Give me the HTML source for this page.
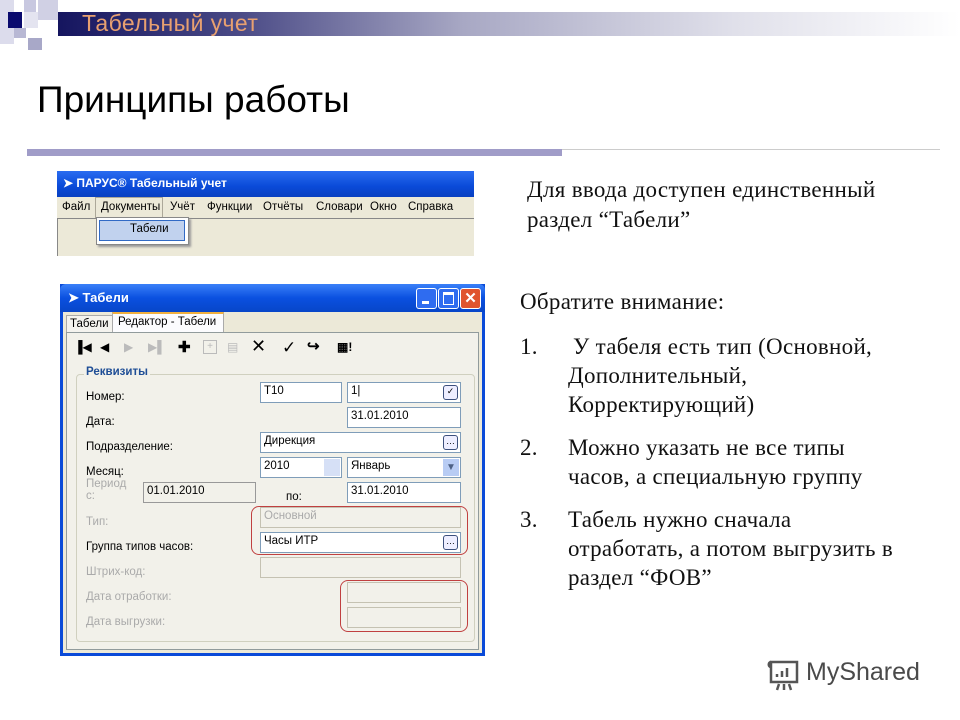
<!DOCTYPE html>
<html><head><meta charset="utf-8"><style>
body{margin:0;width:960px;height:720px;background:#fff;position:relative;overflow:hidden;font-family:"Liberation Sans",sans-serif}
.a{position:absolute}
.s{font-family:"Liberation Serif",serif;font-size:23px;letter-spacing:0.3px;color:#111;white-space:nowrap}
.w{font-size:11.5px;color:#000;white-space:nowrap}
.f{position:absolute;background:#fff;border:1px solid #7f9db9;box-sizing:border-box;font-size:11.5px;padding:2px 3px;height:21px}
.g{color:#aaa}
.dis{background:#f2f1ea;border-color:#c5c2b2}
.dots{position:absolute;right:2px;top:2px;width:15px;height:15px;border:1px solid #3c4f7c;border-radius:3px;background:#eef;font-size:9px;line-height:10px;text-align:center;box-sizing:border-box}
</style></head><body>
<div class="a" style="left:0;top:0;width:14px;height:44px;background:#dcdcec"></div>
<div class="a" style="left:24px;top:0;width:12px;height:12px;background:#c8c8e0"></div>
<div class="a" style="left:8px;top:12px;width:14px;height:16px;background:#0a0a6e"></div>
<div class="a" style="left:24px;top:12px;width:14px;height:16px;background:#e4e4f0"></div>
<div class="a" style="left:14px;top:28px;width:12px;height:10px;background:#b8b8d4"></div>
<div class="a" style="left:28px;top:38px;width:14px;height:12px;background:#a8a8c8"></div>
<div class="a" style="left:38px;top:0;width:20px;height:20px;background:#d0d0e4"></div>
<div class="a" style="left:58px;top:12px;width:902px;height:24px;background:linear-gradient(90deg,#15155f 0%,#4a4a86 20%,#a8a8c4 45%,#e0e0ea 75%,#fff 100%)"></div>
<div class="a" style="left:82px;top:10px;font-size:23px;letter-spacing:0.4px;color:#e8a070">Табельный учет</div>
<div class="a" style="left:37px;top:79px;font-size:37px;color:#000">Принципы работы</div>
<div class="a" style="left:27px;top:149px;width:535px;height:7px;background:#a09cc8"></div>
<div class="a" style="left:562px;top:149px;width:378px;height:1px;background:#ccc"></div>

<div class="a" style="left:57px;top:171px;width:417px;height:85px;background:#ece9d8;overflow:hidden">
 <div class="a" style="left:0;top:0;width:417px;height:26px;background:linear-gradient(180deg,#2a6cf0,#0a4ad8 60%,#0840c0)"></div>
 <div class="a" style="left:6px;top:5px;color:#fff;font-weight:bold;font-size:12px">➤ ПАРУС® Табельный учет</div>
 <div class="a w" style="left:5px;top:30px">Файл</div>
 <div class="a" style="left:38px;top:26px;width:66px;height:20px;border:1px solid #aca899;border-bottom:none"></div>
 <div class="a w" style="left:44px;top:30px">Документы</div>
 <div class="a w" style="left:113px;top:30px">Учёт</div>
 <div class="a w" style="left:150px;top:30px">Функции</div>
 <div class="a w" style="left:206px;top:30px">Отчёты</div>
 <div class="a w" style="left:259px;top:30px">Словари</div>
 <div class="a w" style="left:313px;top:30px">Окно</div>
 <div class="a w" style="left:351px;top:30px">Справка</div>
 <div class="a" style="left:0;top:47px;width:417px;height:1px;background:#888"></div>
 <div class="a" style="left:0;top:48px;width:1px;height:37px;background:#888"></div>
 <div class="a" style="left:39px;top:46px;width:91px;height:26px;background:#fff;border:1px solid #888;box-shadow:2px 2px 2px #999"></div>
 <div class="a" style="left:42px;top:49px;width:84px;height:19px;background:#c1d2ee;border:1px solid #316ac5"></div>
 <div class="a w" style="left:73px;top:52px">Табели</div>
</div>

<div class="a" style="left:60px;top:284px;width:425px;height:372px;background:#0a4ad8"></div>
<div class="a" style="left:60px;top:284px;width:425px;height:28px;background:linear-gradient(180deg,#3a80f8,#0a50e0 50%,#0846c8);border-radius:6px 6px 0 0"></div>
<div class="a" style="left:68px;top:290px;color:#fff;font-weight:bold;font-size:13px">➤ Табели</div>
<div class="a" style="left:416px;top:288px;width:19px;height:19px;background:#2f6cf0;border:1px solid #fff;border-radius:3px"><div style="position:absolute;left:5px;top:12px;width:7px;height:3px;background:#fff"></div></div>
<div class="a" style="left:438px;top:288px;width:19px;height:19px;background:#2f6cf0;border:1px solid #fff;border-radius:3px"><div style="position:absolute;left:4px;top:3px;width:9px;height:9px;border:1px solid #fff;border-top-width:3px"></div></div>
<div class="a" style="left:460px;top:288px;width:19px;height:19px;background:#e0542e;border:1px solid #fff;border-radius:3px;color:#fff;font-weight:bold;font-size:15px;line-height:19px;text-align:center">✕</div>
<div class="a" style="left:63px;top:312px;width:419px;height:341px;background:#ece9d8"></div>
<div class="a" style="left:66px;top:315px;width:45px;height:17px;border:1px solid #aaa;background:#f4f3ee"></div>
<div class="a w" style="left:70px;top:318px">Табели</div>
<div class="a" style="left:112px;top:312px;width:110px;height:21px;background:#fcfcfe;border:1px solid #aaa;border-top:2px solid #f0b040;border-bottom:none"></div>
<div class="a w" style="left:118px;top:316px">Редактор - Табели</div>
<div class="a" style="left:66px;top:332px;width:413px;height:318px;border:1px solid #919b9c;background:#f2f1ea;box-sizing:border-box"></div>
<div class="a" style="left:74px;top:340px;font-size:12px;white-space:nowrap;color:#000">
<span style="position:absolute;left:0">▐◀</span><span style="position:absolute;left:26px">◀</span><span style="position:absolute;left:50px;color:#bbb">▶</span><span style="position:absolute;left:74px;color:#bbb">▶▌</span><span style="position:absolute;left:104px;font-weight:bold;font-size:15px;top:-2px">✚</span><span style="position:absolute;left:129px;color:#bbb;border:1px solid #bbb;width:12px;height:12px;line-height:12px;text-align:center;font-size:10px">+</span><span style="position:absolute;left:153px;color:#bbb">▤</span><span style="position:absolute;left:177px;font-size:18px;top:-4px">✕</span><span style="position:absolute;left:208px;font-size:17px;top:-2px">✓</span><span style="position:absolute;left:233px;font-size:15px;top:-3px;font-weight:bold">↪</span><span style="position:absolute;left:263px;font-weight:bold">▦!</span></div>
<div class="a" style="left:76px;top:374px;width:397px;height:266px;border:1px solid #d0d0bf;border-radius:4px"></div>
<div class="a" style="left:84px;top:366px;font-size:11.5px;font-weight:bold;color:#1f4e96;background:#f2f1ea;padding:0 2px">Реквизиты</div>
<div class="a w" style="left:86px;top:391px">Номер:</div>
<div class="a w" style="left:86px;top:416px">Дата:</div>
<div class="a w" style="left:86px;top:441px">Подразделение:</div>
<div class="a w" style="left:86px;top:466px">Месяц:</div>
<div class="a w g" style="left:86px;top:478px;line-height:12px">Период<br>с:</div>
<div class="a w" style="left:286px;top:491px">по:</div>
<div class="a w g" style="left:86px;top:516px">Тип:</div>
<div class="a w" style="left:86px;top:541px">Группа типов часов:</div>
<div class="a w g" style="left:86px;top:566px">Штрих-код:</div>
<div class="a w g" style="left:86px;top:591px">Дата отработки:</div>
<div class="a w g" style="left:86px;top:616px">Дата выгрузки:</div>
<div class="f" style="left:260px;top:382px;width:82px">Т10</div>
<div class="f" style="left:347px;top:382px;width:114px">1|<div class="dots">✓</div></div>
<div class="f" style="left:347px;top:407px;width:114px">31.01.2010</div>
<div class="f" style="left:260px;top:432px;width:201px">Дирекция<div class="dots">…</div></div>
<div class="f" style="left:260px;top:457px;width:82px">2010<div style="position:absolute;right:1px;top:1px;width:16px;height:17px;background:#d6e0f6"></div></div>
<div class="f" style="left:347px;top:457px;width:114px">Январь<div style="position:absolute;right:1px;top:1px;width:16px;height:17px;background:#b8ccf4;color:#4d6185;font-size:10px;text-align:center;line-height:17px">▼</div></div>
<div class="f dis" style="left:143px;top:482px;width:113px;border-color:#999">01.01.2010</div>
<div class="f" style="left:347px;top:482px;width:114px">31.01.2010</div>
<div class="f dis g" style="left:260px;top:507px;width:201px">Основной</div>
<div class="f" style="left:260px;top:532px;width:201px">Часы ИТР<div class="dots">…</div></div>
<div class="f dis" style="left:260px;top:557px;width:201px"></div>
<div class="f dis" style="left:347px;top:582px;width:114px"></div>
<div class="f dis" style="left:347px;top:607px;width:114px"></div>
<div class="a" style="left:251px;top:506px;width:217px;height:49px;border:1px solid #c04040;border-radius:8px;box-sizing:border-box"></div>
<div class="a" style="left:340px;top:580px;width:128px;height:52px;border:1px solid #c04040;border-radius:8px;box-sizing:border-box"></div>

<div class="a s" style="left:527px;top:177px">Для ввода доступен единственный</div>
<div class="a s" style="left:527px;top:207px">раздел “Табели”</div>
<div class="a s" style="left:520px;top:289px">Обратите внимание:</div>
<div class="a s" style="left:520px;top:334px">1.</div>
<div class="a s" style="left:573px;top:334px">У табеля есть тип (Основной,</div>
<div class="a s" style="left:568px;top:363px">Дополнительный,</div>
<div class="a s" style="left:568px;top:392px">Корректирующий)</div>
<div class="a s" style="left:520px;top:435px">2.</div>
<div class="a s" style="left:568px;top:435px">Можно указать не все типы</div>
<div class="a s" style="left:568px;top:464px">часов, а специальную группу</div>
<div class="a s" style="left:520px;top:507px">3.</div>
<div class="a s" style="left:568px;top:507px">Табель нужно сначала</div>
<div class="a s" style="left:568px;top:536px">отработать, а потом выгрузить в</div>
<div class="a s" style="left:568px;top:565px">раздел “ФОВ”</div>

<svg class="a" style="left:767px;top:658px" width="36" height="34" viewBox="0 0 36 34" fill="none" stroke="#555" stroke-width="2.5"><path d="M4 4h26v20H4z"/><path d="M4 4c-3 0-3 5 0 5"/><path d="M10 19v-3M15 19v-6M20 19v-9"/><path d="M12 26l-2 6M17 26v6M22 26l2 6"/></svg>
<div class="a" style="left:806px;top:658px;font-size:25px;color:#4a4a4a">MyShared</div>
</body></html>
